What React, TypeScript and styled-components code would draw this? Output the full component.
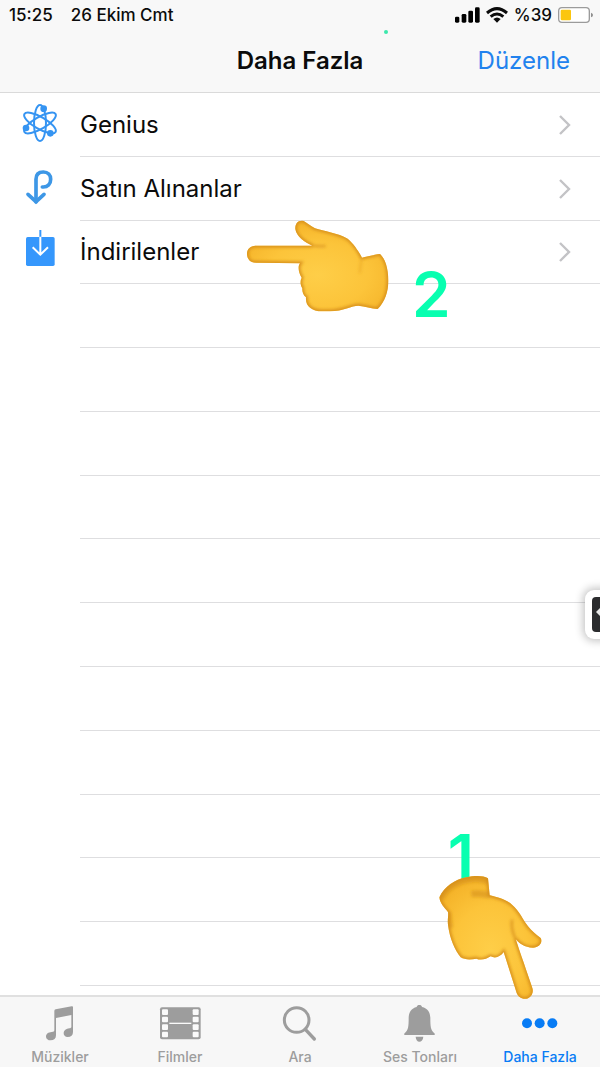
import React from 'react';
import styled, { createGlobalStyle } from 'styled-components';

const GlobalStyle = createGlobalStyle`
  * { box-sizing: border-box; }
  body {
    margin: 0;
    background: #fff;
    color: #0b0b0b;
    font-family: Inter, "Liberation Sans", sans-serif;
  }
`;

const Screen = styled.div`
  position: relative;
  min-height: 100vh;
  display: flex;
  flex-direction: column;
  overflow: hidden;
`;

const Header = styled.header`
  background: #f8f8f8;
  border-bottom: 1px solid #dadada;
`;

const StatusBar = styled.div`
  display: flex;
  align-items: center;
  justify-content: space-between;
  height: 30px;
  padding: 0 7px 0 9px;
  font-size: 17px;
  font-weight: 500;
`;

const StatusGroup = styled.div<{ $gap: number }>`
  display: flex;
  align-items: center;
  gap: ${(p) => p.$gap}px;
`;

const NavBar = styled.div`
  display: grid;
  grid-template-columns: 1fr auto 1fr;
  align-items: center;
  height: 62px;
  padding: 0 30px;
`;

const Title = styled.h1`
  grid-column: 2;
  margin: 0;
  font-size: 24px;
  line-height: 32px;
  font-weight: 600;
`;

const EditButton = styled.button`
  justify-self: end;
  padding: 0;
  border: 0;
  background: none;
  color: #2182ee;
  font: inherit;
  font-size: 24px;
  line-height: 32px;
`;

const List = styled.ul`
  flex: 1;
  display: grid;
  grid-auto-rows: minmax(48px, 1fr);
  margin: 0;
  padding: 0 0 9px;
  list-style: none;
`;

const Row = styled.li`
  display: grid;
  grid-template-columns: 20px 60px 1fr;

  &::after {
    content: '';
    grid-column: 3;
    grid-row: 1;
    align-self: end;
    height: 1px;
    background: #dedee0;
  }
`;

const RowLink = styled.a`
  grid-column: 2 / 4;
  grid-row: 1;
  display: grid;
  grid-template-columns: 60px 1fr auto;
  align-items: center;
  padding-right: 28px;
  color: inherit;
  font-size: 24px;
  line-height: 32px;
  text-decoration: none;
`;

const TabBar = styled.nav`
  display: grid;
  grid-template-columns: repeat(5, 1fr);
  height: 72px;
  padding-top: 6px;
  border-top: 2px solid #e0e0e0;
  background: #f7f7f7;
`;

const Tab = styled.a<{ $active?: boolean }>`
  display: flex;
  flex-direction: column;
  align-items: center;
  gap: 4px;
  color: ${(p) => (p.$active ? '#087cf5' : '#9d9d9d')};
  font-size: 14px;
  line-height: 20px;
  font-weight: 500;
  text-decoration: none;
`;

const Marker = styled.span`
  position: absolute;
  color: #08ffb0;
  font-size: 62px;
  line-height: 64px;
  font-weight: 600;
`;

const MarkerOne = styled(Marker)`
  right: 126px;
  bottom: 178px;
`;

const MarkerTwo = styled(Marker)`
  left: 412px;
  top: 263px;
`;

const LeftHand = styled.svg`
  position: absolute;
  left: 245px;
  top: 218px;
`;

const DownHand = styled.svg`
  position: absolute;
  right: 57px;
  bottom: 67px;
`;

const Dot = styled.span`
  position: absolute;
  left: 384px;
  top: 30px;
  width: 4px;
  height: 4px;
  border-radius: 50%;
  background: #3ce8ac;
`;

const FloatingButton = styled.button`
  position: absolute;
  right: -35px;
  bottom: 428px;
  width: 50px;
  height: 49px;
  padding: 7px;
  border: 0;
  border-radius: 9px;
  background: #fff;
  box-shadow: 0 0 8px 2px rgba(0, 0, 0, 0.24);
`;

const GeniusIcon = () => (
  <svg width="40" height="44" viewBox="0 0 120 132" fill="none" stroke="#3594f2" strokeWidth="6">
    <ellipse cx="60" cy="60" rx="18" ry="54" />
    <ellipse cx="60" cy="60" rx="18" ry="54" transform="rotate(60 60 60)" />
    <ellipse cx="60" cy="60" rx="18" ry="54" transform="rotate(120 60 60)" />
    <g fill="#3594f2" stroke="none">
      <circle cx="71" cy="17" r="10" />
      <circle cx="18" cy="75" r="10" />
      <circle cx="91" cy="91" r="10" />
    </g>
  </svg>
);

const PurchasedIcon = () => (
  <svg width="40" height="44" viewBox="0 0 120 132" fill="none" stroke="#3d97e6" strokeWidth="11">
    <path d="M48 104V37C48 23 56 15 70 15c14 0 22 9 22 22 0 14-9 23-22 23h-3" strokeLinecap="round" />
    <path d="M24 82l24 22 24-22" strokeLinecap="round" />
  </svg>
);

const DownloadedIcon = () => (
  <svg width="40" height="44" viewBox="0 0 120 132" fill="none">
    <rect x="18" y="21" width="86" height="87" rx="5" fill="#3597fc" />
    <path d="M61 0v21" stroke="#3597fc" strokeWidth="6" />
    <path d="M61 20v52M38 52l23 22 23-22" stroke="#fff" strokeWidth="6" />
  </svg>
);

const Chevron = () => (
  <svg width="14" height="22" viewBox="0 0 14 22" fill="none" stroke="#c3c3c6" strokeWidth="2.4">
    <path d="M2 2l9 9-9 9" />
  </svg>
);

const TabIcon = ({ children }: { children: React.ReactNode }) => (
  <svg width="44" height="40" viewBox="0 0 132 120" fill="currentColor" aria-hidden="true">
    {children}
  </svg>
);

const MusicIcon = () => (
  <TabIcon>
    <path d="M49 24q0-4 4-5l48-9q4-1 4 3v74c0 10-6 15-16 15-8 0-12-5-12-11 0-9 8-14 17-15 4-1 6-2 6-5V36L54 45v52c0 10-6 15-16 15-8 0-14-5-14-11 0-9 7-13 17-14 6-1 8-2 8-7z" />
  </TabIcon>
);

const FilmIcon = () => (
  <TabIcon>
    <rect x="6" y="13" width="122" height="96" rx="6" />
    <g fill="#fafafa">
      {[19, 41, 64, 86].map((y) => (
        <React.Fragment key={y}>
          <rect x="12" y={y} width="18" height="17" rx="3" />
          <rect x="104" y={y} width="18" height="17" rx="3" />
        </React.Fragment>
      ))}
      <rect x="34" y="59" width="66" height="4" />
    </g>
  </TabIcon>
);

const SearchIcon = () => (
  <TabIcon>
    <g fill="none" stroke="currentColor">
      <circle cx="56" cy="51" r="37" strokeWidth="9" />
      <path d="M82 79l27 29" strokeWidth="10" strokeLinecap="round" />
    </g>
  </TabIcon>
);

const BellIcon = () => (
  <TabIcon>
    <path d="M64 6c4 0 7 2 8 6 17 4 25 16 25 34 0 24 1 36 12 45 3 2 2 5-1 5H21c-3 0-4-3-1-5 11-9 12-21 12-45 0-18 8-30 24-34 1-4 4-6 8-6z" />
    <path d="M53 101h23c-1 10-6 15-12 15s-10-5-11-15z" />
  </TabIcon>
);

const MoreIcon = () => (
  <TabIcon>
    <circle cx="27" cy="61" r="15" />
    <circle cx="65" cy="61" r="15" />
    <circle cx="103" cy="61" r="15" />
  </TabIcon>
);

const SignalIcon = () => (
  <svg width="25" height="16" viewBox="0 0 75 48">
    <rect x="0" y="29" width="13" height="18" rx="4" />
    <rect x="20" y="21" width="14" height="26" rx="4" />
    <rect x="40" y="11" width="14" height="36" rx="4" />
    <rect x="60" y="1" width="14" height="46" rx="4" />
  </svg>
);

const WifiIcon = () => (
  <svg width="22" height="16" viewBox="0 0 66 48" fill="none" stroke="#0b0b0b" strokeWidth="9">
    <path d="M3 18Q33-8 63 18" />
    <path d="M14 29q19-16 38 0" />
    <path d="M22 36q11-9 22 0L33 47z" fill="#0b0b0b" stroke="none" />
  </svg>
);

const BatteryIcon = () => (
  <svg width="35" height="16" viewBox="0 0 105 48">
    <rect x="2" y="2" width="92" height="44" rx="10" fill="#fff" stroke="#9b9b9b" strokeWidth="4" />
    <rect x="8" y="8" width="31" height="32" rx="4" fill="#fbc60f" />
    <path d="M99 17q6 2 6 7t-6 7z" fill="#8e8e8e" />
  </svg>
);

type HandProps = { id: string; outline: string; children: React.ReactNode };

const HandShape = ({ id, outline, children }: HandProps) => (
  <>
    <defs>
      <radialGradient id={`${id}-fill`} cx="0.5" cy="0.6" r="0.6">
        <stop offset="0" stopColor="#fece48" />
        <stop offset="0.6" stopColor="#fcc43a" />
        <stop offset="1" stopColor="#f5b42a" />
      </radialGradient>
      <clipPath id={`${id}-clip`}>
        <path d={outline} />
      </clipPath>
      <filter id={`${id}-soft`} x="-20%" y="-20%" width="140%" height="140%">
        <feGaussianBlur stdDeviation="5" />
      </filter>
    </defs>
    <path d={outline} fill={`url(#${id}-fill)`} />
    <g clipPath={`url(#${id}-clip)`} fill="none">
      <g filter={`url(#${id}-soft)`}>
        <path d={outline} stroke="#d9921c" strokeWidth="11" />
        {children}
      </g>
    </g>
  </>
);

const LEFT_OUTLINE =
  'M62 107C45 107 36 118 36 131C36 146 45 158 62 158L195 160C188 168 190 188 200 203C194 214 197 228 202 235C201 245 205 257 213 262C211 287 228 303 262 304L285 304C325 303 350 287 370 287C390 289 410 295 428 297C450 275 460 245 460 212C460 175 450 145 435 132C418 134 395 140 381 143C372 125 355 100 338 86C310 70 265 63 240 55C225 46 215 38 206 33C190 29 180 40 181 57C184 80 210 97 232 107Z';

const DOWN_OUTLINE =
  'M44 218C60 185 90 165 125 158C150 153 175 152 190 161L195 212C215 216 245 225 262 240C285 260 295 285 310 305C322 320 335 331 348 340C355 352 345 368 325 369C300 369 282 355 273 343C285 380 310 450 323 490C328 505 318 520 305 522C290 524 280 515 276 505L237 382C228 395 213 403 198 395C185 404 168 408 155 402C140 405 120 406 108 398C90 375 75 340 70 300C68 285 72 270 70 262C60 250 45 235 44 218Z';

const rows = [
  { label: 'Genius', icon: <GeniusIcon /> },
  { label: 'Satın Alınanlar', icon: <PurchasedIcon /> },
  { label: 'İndirilenler', icon: <DownloadedIcon /> },
];

const EMPTY_ROWS = 11;

const tabs = [
  { label: 'Müzikler', icon: <MusicIcon /> },
  { label: 'Filmler', icon: <FilmIcon /> },
  { label: 'Ara', icon: <SearchIcon /> },
  { label: 'Ses Tonları', icon: <BellIcon /> },
  { label: 'Daha Fazla', icon: <MoreIcon />, active: true },
];

export default function App() {
  return (
    <>
      <GlobalStyle />
      <Screen lang="tr">
        <Header>
          <StatusBar>
            <StatusGroup $gap={18}>
              <span>15:25</span>
              <span>26 Ekim Cmt</span>
            </StatusGroup>
            <StatusGroup $gap={6}>
              <SignalIcon />
              <WifiIcon />
              <span>%39</span>
              <BatteryIcon />
            </StatusGroup>
          </StatusBar>
          <NavBar>
            <Title>Daha Fazla</Title>
            <EditButton type="button">Düzenle</EditButton>
          </NavBar>
        </Header>

        <List>
          {rows.map((row) => (
            <Row key={row.label}>
              <RowLink href="#">
                {row.icon}
                <span>{row.label}</span>
                <Chevron />
              </RowLink>
            </Row>
          ))}
          {Array.from({ length: EMPTY_ROWS }, (_, i) => (
            <Row key={i} aria-hidden="true" />
          ))}
        </List>

        <TabBar>
          {tabs.map((tab) => (
            <Tab key={tab.label} href="#" $active={tab.active}>
              {tab.icon}
              <span>{tab.label}</span>
            </Tab>
          ))}
        </TabBar>

        <Dot />
        <MarkerTwo>2</MarkerTwo>
        <MarkerOne>1</MarkerOne>

        <LeftHand width="147" height="97" viewBox="30 24 441 291" aria-hidden="true">
          <HandShape id="left" outline={LEFT_OUTLINE}>
            <path d="M205 98Q235 112 272 108" stroke="#dd9820" strokeWidth="6" />
            <path d="M381 143Q376 165 374 190" stroke="#e9a524" strokeWidth="8" strokeOpacity="0.5" />
          </HandShape>
        </LeftHand>

        <DownHand width="105" height="126" viewBox="40 148 315 378" aria-hidden="true">
          <HandShape id="down" outline={DOWN_OUTLINE}>
            <path d="M273 343Q258 315 262 285" stroke="#dd9820" strokeWidth="7" />
            <path
              d="M48 222C64 190 95 172 128 165Q165 158 192 170M195 212Q165 205 140 208M70 262L75 310"
              stroke="#d08a18"
              strokeWidth="20"
              strokeOpacity="0.5"
            />
          </HandShape>
        </DownHand>

        <FloatingButton type="button" aria-label="Kısayol">
          <svg width="36" height="35" viewBox="0 0 36 35">
            <rect width="36" height="35" rx="4" fill="#2b2c2e" />
            <path d="M4 15l5-5v10z" fill="#e8e8e8" />
          </svg>
        </FloatingButton>
      </Screen>
    </>
  );
}
